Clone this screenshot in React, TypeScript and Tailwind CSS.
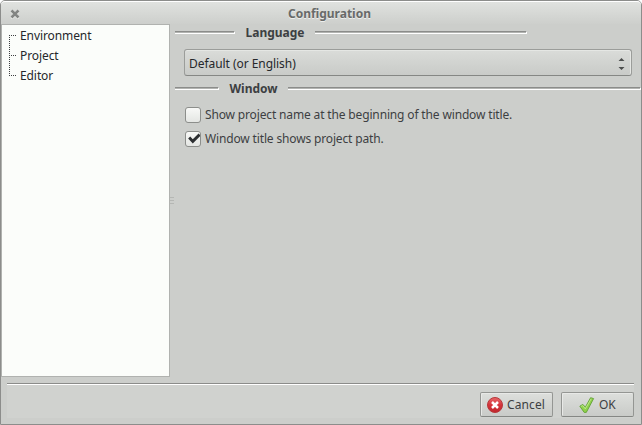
import React from 'react';

function Groove({ className }: { className: string }) {
  return (
    <div className={`h-[3px] shrink-0 border-r border-b border-t border-t-[#8b8c8a] border-r-white border-b-white bg-[#b2b4b1] ${className}`} />
  );
}

function CheckRow({ label, checked }: { label: string; checked?: boolean }) {
  return (
    <label className="flex h-4 items-center gap-1">
      <span className="flex size-4 shrink-0 items-center justify-center rounded-[3px] border border-[#8c8e8b] bg-linear-to-b from-[#f8f9f7] to-[#e4e6e3]">
        {checked && (
          <svg className="shrink-0" width="14" height="14" viewBox="0 0 14 14" fill="none">
            <path d="M3.2 5.6 6.8 9.4 13.6 2.6" stroke="#2c2f31" strokeWidth="2.9" />
          </svg>
        )}
      </span>
      <span className="whitespace-nowrap tracking-[-0.15px]">{label}</span>
    </label>
  );
}

function DialogButton({ children }: { children: React.ReactNode }) {
  return (
    <button className="flex h-[25px] w-[73px] items-center rounded-[2px] border border-[#949693] border-b-[#858784] bg-linear-to-b from-[#dddfdc] to-[#c9cbc8] shadow-[inset_1px_1px_0_#e8e9e7]">
      {children}
    </button>
  );
}

export default function App() {
  return (
    <div className="h-[425px] w-[642px] overflow-hidden bg-white font-['Noto_Sans',sans-serif] text-[12px] leading-4 text-[#3d3f42]">
      <div className="flex h-full flex-col rounded-t-[5px] border border-[#8c8d8b] bg-[#cccecb]">
        <header className="flex h-[23px] shrink-0 items-center rounded-t-[4px] border-t border-white bg-linear-to-b from-[#e0e2df] to-[#cdcfcc]">
          <svg className="ml-[9px] mt-px shrink-0" width="10" height="10" viewBox="0 0 10 10">
            <path d="m1.5 1.5 7 7m0-7-7 7" stroke="#f0f1ef" strokeWidth="2.4" transform="translate(0 1)" />
            <path d="m1.5 1.5 7 7m0-7-7 7" stroke="#838583" strokeWidth="2.5" />
          </svg>
          <h1 className="mt-0.5 flex-1 pr-[2px] text-center font-bold text-[#686a69] [text-shadow:0_1px_0_#eeefed]">Configuration</h1>
        </header>

        <div className="flex h-[353px] shrink-0">
          <nav className="flex w-[169px] shrink-0 border border-[#b0b2af] bg-[#fbfdfa] pt-px tracking-[-0.09px] text-[#26282b]">
            <svg className="ml-[7px] mt-[9px] shrink-0" width="8" height="42" viewBox="0 0 8 42" stroke="#3c3e40" strokeDasharray="1 1">
              <path d="M.5 0v41M0 .5h7M0 20.5h7M0 40.5h7" />
            </svg>
            <ul className="ml-[3px]">
              <li className="h-5 leading-5">Environment</li>
              <li className="h-5 leading-5">Project</li>
              <li className="h-5 leading-5">Editor</li>
            </ul>
          </nav>

          <div className="flex w-[4px] shrink-0 flex-col gap-[2px] pt-[173px]">
            <i className="h-px w-full bg-[#b5b7b4]" />
            <i className="h-px w-full bg-[#b5b7b4]" />
            <i className="h-px w-full bg-[#b5b7b4]" />
          </div>

          <main className="min-w-0 flex-1">
            <div className="flex h-[25px] items-start">
              <Groove className="mt-[7px] ml-px w-[60px]" />
              <h2 className="mt-px w-[80px] text-center font-bold">Language</h2>
              <Groove className="mt-[7px] w-[212px]" />
            </div>
            <div className="ml-[10px] flex h-[27px] w-[448px] items-center justify-between rounded-[3px] border border-[#9b9d9a] border-b-[#858784] bg-linear-to-b from-[#dadcd9] to-[#c9cbc8] pr-[6px] pl-1 text-[#26282b] shadow-[inset_0_1px_0_#e5e7e4,inset_-1px_0_0_#e5e7e4]">
              <span className="pt-[2px] tracking-[-0.05px]">Default (or English)</span>
              <svg className="mt-px" width="7" height="13" viewBox="0 0 7 13" fill="#4c4e4d">
                <path d="M.5 4h6L3.5 1zM.5 10h6l-3 3z" />
              </svg>
            </div>
            <div className="mt-1 flex h-[27px] items-start">
              <Groove className="mt-[7px] ml-px w-[44px]" />
              <h2 className="mt-px w-[69px] text-center font-bold">Window</h2>
              <Groove className="mt-[7px] w-[353px]" />
            </div>
            <div className="ml-[11px] flex flex-col gap-2">
              <CheckRow label="Show project name at the beginning of the window title." />
              <CheckRow label="Window title shows project path." checked />
            </div>
          </main>
        </div>

        <footer className="mt-[6px] mr-[7px] ml-[6px] flex h-[35px] items-start justify-end gap-2 border-t border-[#8b8c8a] bg-[#d0d2cf] pt-2 shadow-[inset_0_1px_0_#fff]">
          <DialogButton>
            <svg className="ml-[6px] shrink-0" width="16" height="16" viewBox="0 0 16 16">
              <defs>
                <linearGradient id="red" x2="0" y2="1">
                  <stop stopColor="#e8696b" />
                  <stop offset=".5" stopColor="#d5343a" />
                  <stop offset="1" stopColor="#c0262c" />
                </linearGradient>
              </defs>
              <circle cx="8" cy="8" r="7.5" fill="url(#red)" stroke="#b5383b" />
              <path d="m5 5 6 6m0-6-6 6" stroke="#fff" strokeWidth="2.5" />
            </svg>
            <span className="ml-1 tracking-[0.1px]">Cancel</span>
          </DialogButton>
          <DialogButton>
            <svg className="ml-[17px] shrink-0" width="16" height="16" viewBox="0 0 16 16">
              <path d="M.8 9.2 3.9 7.4 6.3 10.2 11.6.7l3 .9L7.3 15.4H5.2z" fill="#8fd14a" stroke="#62a038" strokeWidth=".9" strokeLinejoin="round" />
              <path d="m2.2 9.4 1.5-.8 2.6 3.2L12.2 1.8" fill="none" stroke="#c2ea92" strokeWidth=".9" />
            </svg>
            <span className="ml-[4px]">OK</span>
          </DialogButton>
        </footer>
      </div>
    </div>
  );
}
